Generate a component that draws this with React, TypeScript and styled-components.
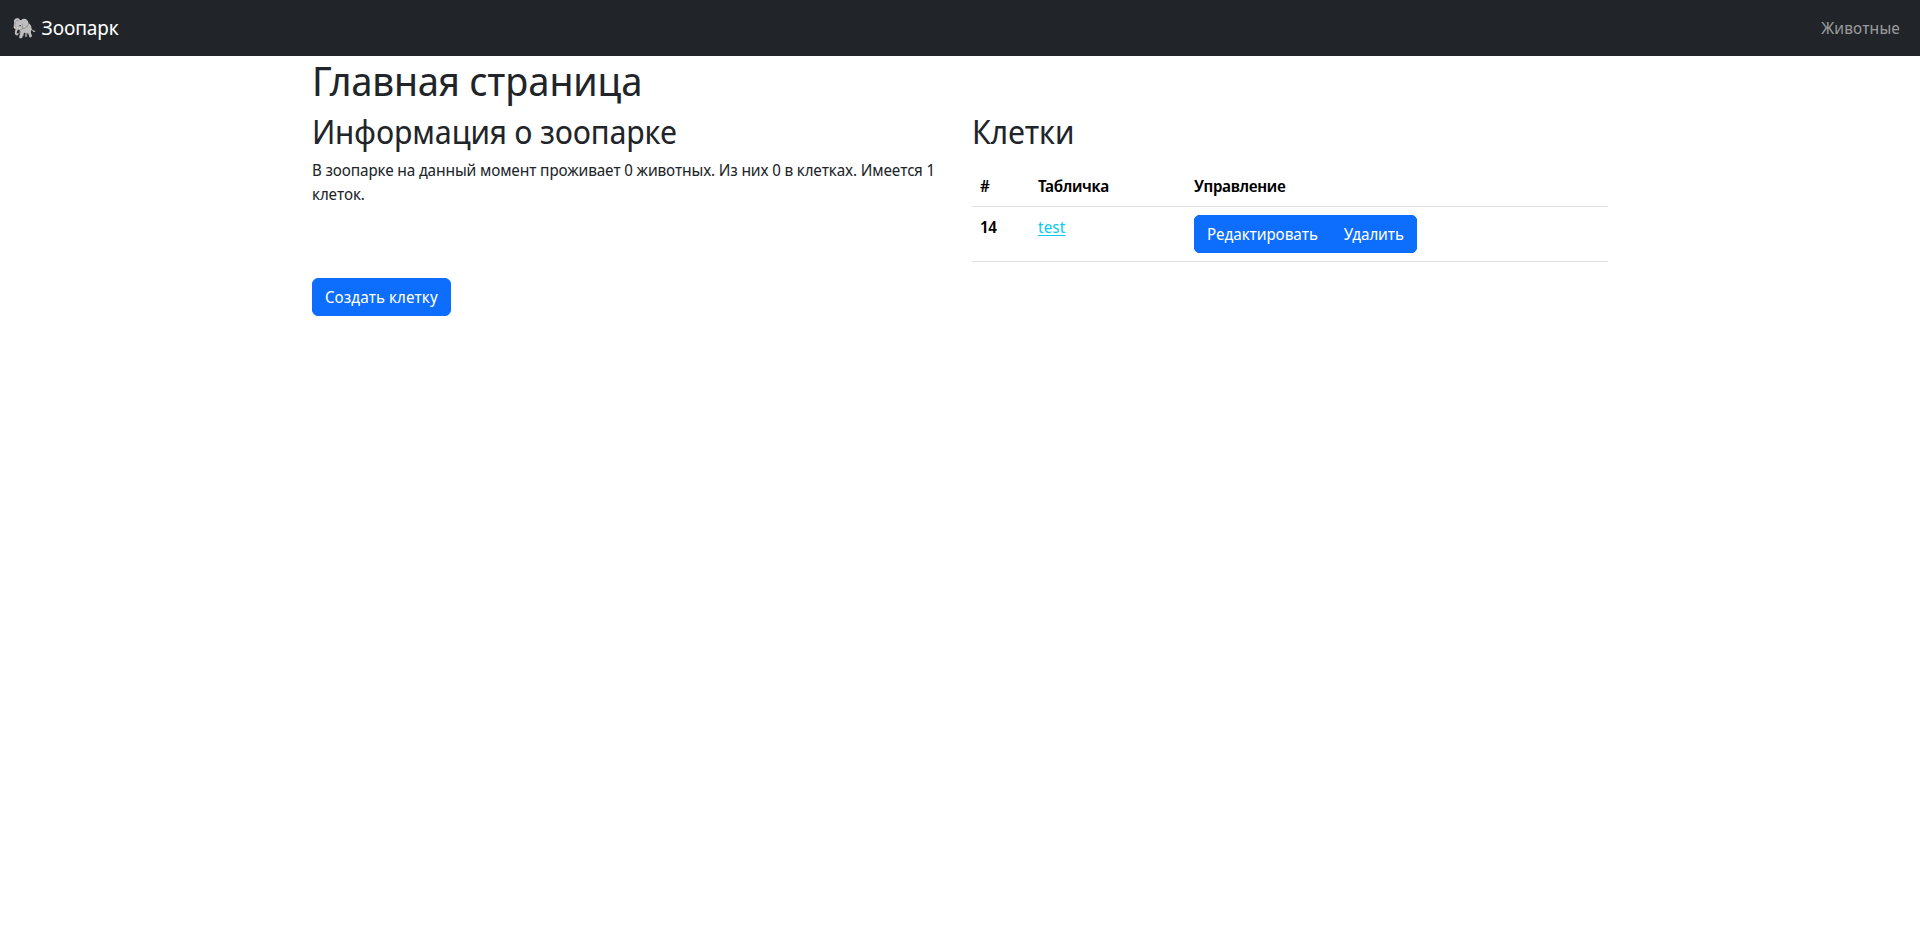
import React from "react";
import styled, { createGlobalStyle } from "styled-components";

const Global = createGlobalStyle`
  *, *::before, *::after { box-sizing: border-box; }
  body {
    margin: 0;
    font-family: "Noto Sans Display", "Noto Sans", sans-serif;
    font-size: 16px;
    line-height: 1.5;
    letter-spacing: -0.008em;
    color: #212529;
    background: #fff;
  }
`;

const Navbar = styled.nav`
  display: flex;
  align-items: center;
  justify-content: space-between;
  height: 56px;
  padding: 0 12px;
  background: #212529;
`;

const Brand = styled.a`
  font-size: 20px;
  line-height: 30px;
  color: #fff;
  text-decoration: none;
`;

const NavLink = styled.a`
  padding: 8px;
  color: rgba(255, 255, 255, 0.55);
  letter-spacing: 0.01em;
  text-decoration: none;
`;

const Container = styled.main`
  width: 1320px;
  margin: 0 auto;
  padding: 0 12px;
`;

const Title = styled.h1`
  margin: 0;
  padding: 1px 0 7px;
  font-size: 40px;
  font-weight: 400;
  line-height: 1.2;
  letter-spacing: -0.004em;
`;

const Heading = styled.h2`
  margin: 0;
  padding: 1px 0 7px;
  font-size: 32px;
  font-weight: 400;
  line-height: 1.2;
  letter-spacing: -0.0055em;
`;

const Row = styled.div`
  display: grid;
  grid-template-columns: 1fr 1fr;
  column-gap: 24px;
`;

const Text = styled.p`
  margin: 0 0 72px;
`;

const Button = styled.button`
  padding: 6px 12px;
  border: 1px solid #0d6efd;
  border-radius: 6px;
  background: #0d6efd;
  color: #fff;
  font: inherit;
  letter-spacing: 0.004em;
`;

const ButtonGroup = styled.div`
  display: inline-flex;
  vertical-align: middle;
  overflow: hidden;
  border-radius: 6px;
  background: #0d6efd;
  & > ${Button} {
    border-radius: 0;
    letter-spacing: -0.005em;
  }
`;

const TableWrap = styled.div`
  padding-top: 7.6px;
`;

const Table = styled.table`
  width: 100%;
  table-layout: fixed;
  border-collapse: separate;
  border-spacing: 0;
  color: #000;
`;

const Column = styled.col<{ $width: number }>`
  width: ${(p) => p.$width}px;
`;

const WideColumn = styled.col`
  width: auto;
`;

const HeadCell = styled.th`
  padding: 8px;
  border-bottom: 1px solid #dee2e6;
  text-align: left;
  font-weight: 600;
  letter-spacing: -0.02em;
  vertical-align: top;
`;

const Cell = styled.td`
  padding: 8px;
  border-bottom: 1px solid #dee2e6;
  vertical-align: top;
`;

const InfoLink = styled.a`
  color: #0dcaf0;
  letter-spacing: 0.01em;
  text-decoration: underline;
  text-decoration-thickness: 1px;
  text-underline-offset: 2px;
`;

export default function App() {
  return (
    <>
      <Global />
      <Navbar>
        <Brand href="#">🐘 Зоопарк</Brand>
        <NavLink href="#">Животные</NavLink>
      </Navbar>
      <Container>
        <Title>Главная страница</Title>
        <Row>
          <div>
            <Heading>Информация о зоопарке</Heading>
            <Text>
              В зоопарке на данный момент проживает 0 животных. Из них 0 в клетках. Имеется 1 клеток.
            </Text>
            <Button>Создать клетку</Button>
          </div>
          <div>
            <Heading>Клетки</Heading>
            <TableWrap>
              <Table>
                <colgroup>
                  <Column $width={58} />
                  <Column $width={156} />
                  <WideColumn />
                </colgroup>
                <thead>
                  <tr>
                    <HeadCell scope="col">#</HeadCell>
                    <HeadCell scope="col">Табличка</HeadCell>
                    <HeadCell scope="col">Управление</HeadCell>
                  </tr>
                </thead>
                <tbody>
                  <tr>
                    <HeadCell scope="row">14</HeadCell>
                    <Cell><InfoLink href="#">test</InfoLink></Cell>
                    <Cell>
                      <ButtonGroup>
                        <Button>Редактировать</Button>
                        <Button>Удалить</Button>
                      </ButtonGroup>
                    </Cell>
                  </tr>
                </tbody>
              </Table>
            </TableWrap>
          </div>
        </Row>
      </Container>
    </>
  );
}
